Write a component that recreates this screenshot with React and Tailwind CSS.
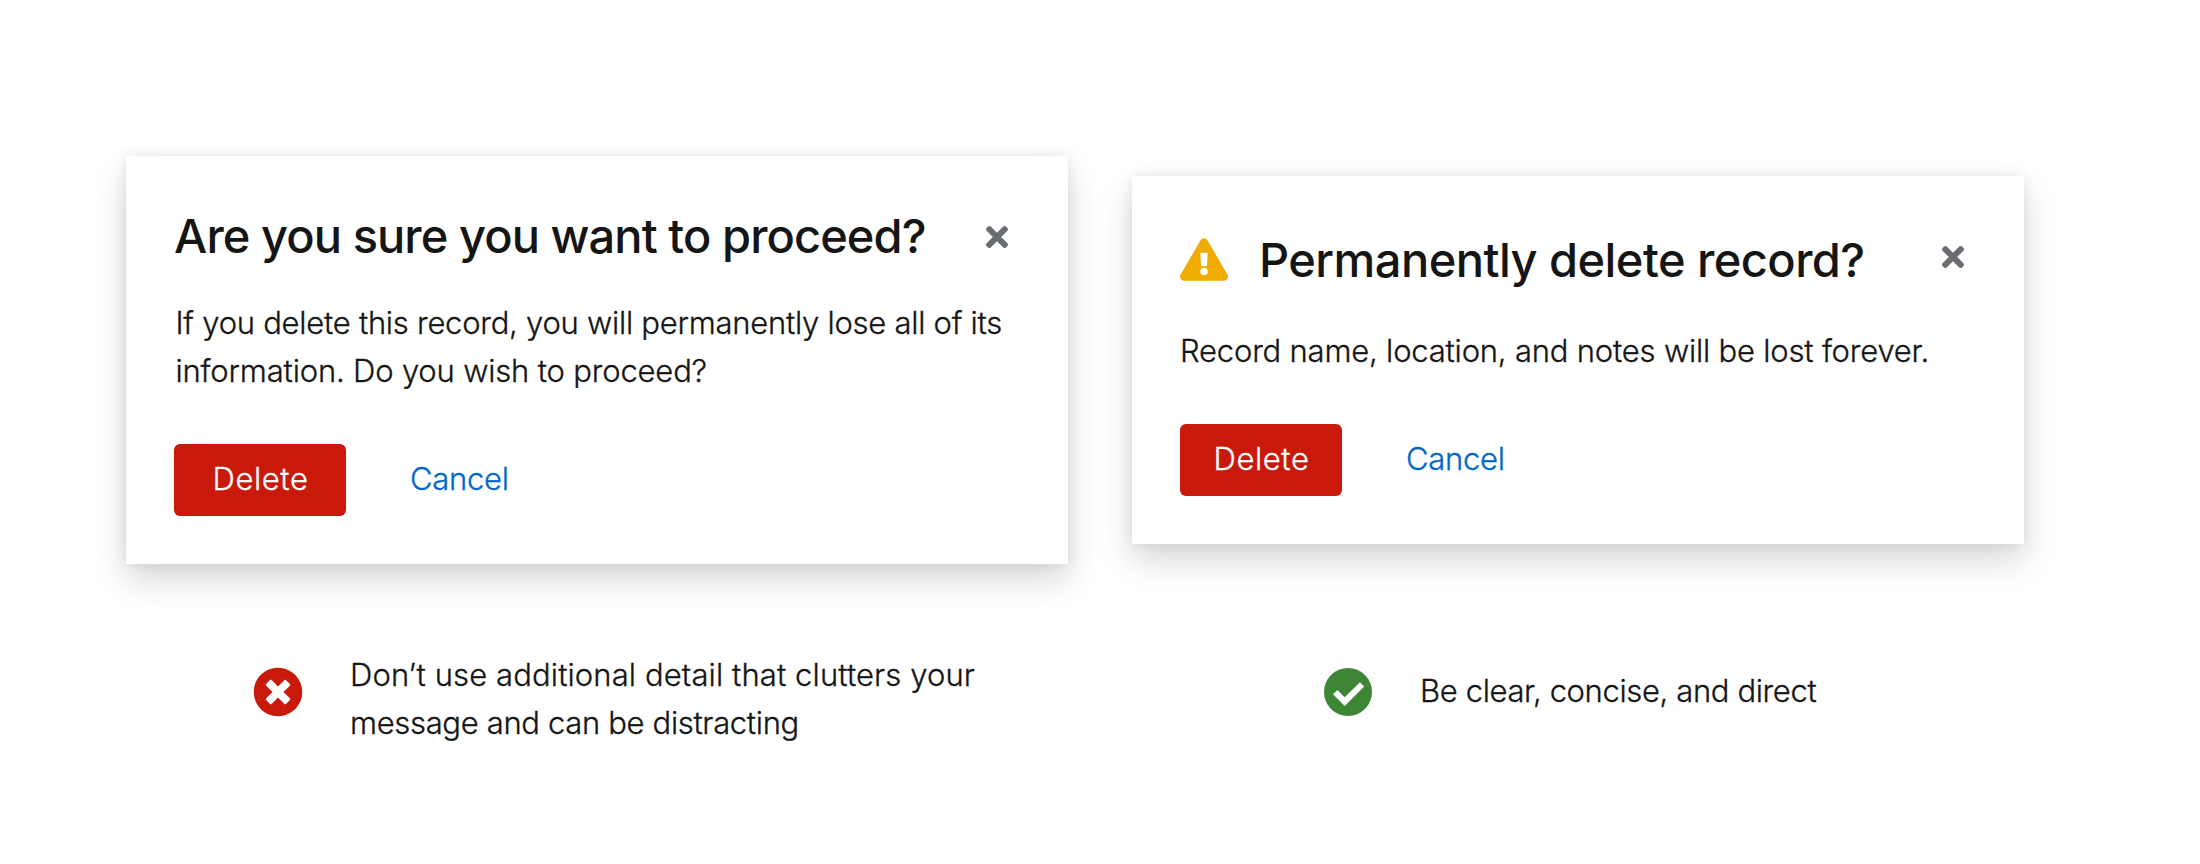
import { FaExclamationTriangle, FaTimes, FaTimesCircle } from 'react-icons/fa';

const cardClass =
  'flex flex-col bg-white px-12 pb-12 shadow-[0_16px_32px_rgba(3,3,3,0.16),0_0_12px_rgba(3,3,3,0.08)]';

function CheckCircle({ className }) {
  return (
    <svg viewBox="0 0 48 48" className={className} aria-hidden="true">
      <circle cx="24" cy="24" r="24" fill="currentColor" />
      <path
        d="M13.36 23.02 20.7 30.36 35.89 15.17 39.21 18.49 20.7 37 10.04 26.34Z"
        fill="white"
        stroke="white"
        strokeWidth="1.4"
        strokeLinejoin="round"
      />
    </svg>
  );
}

function CloseButton({ className }) {
  return (
    <button type="button" aria-label="Close" className={`flex text-[#6a6e73] ${className}`}>
      <FaTimes className="h-8 w-[22px]" />
    </button>
  );
}

function Actions({ deleteClass, cancelClass }) {
  return (
    <div className="mt-[49px] flex h-[72px]">
      <button
        type="button"
        className={`flex items-center justify-center rounded-md bg-[#c9190b] pb-[2px] text-white ${deleteClass}`}
      >
        Delete
      </button>
      <button type="button" className={`flex items-center pb-[2px] text-[#0066cc] ${cancelClass}`}>
        Cancel
      </button>
    </div>
  );
}

export default function App() {
  return (
    <main className="h-[864px] w-[2200px] overflow-hidden bg-white pl-[126px] pt-[156px] font-['Inter',sans-serif] text-[31px] font-light leading-[48px] text-[#151515] [-webkit-text-stroke-width:0.3px]">
      <div className="flex h-[408px] items-center gap-16">
        <section className={`h-[408px] w-[942px] pt-[50px] ${cardClass}`}>
          <header className="flex h-[60px] justify-between">
            <h2 className="whitespace-nowrap text-[47px] font-medium leading-[60px] tracking-[-0.93px] [-webkit-text-stroke-width:0px]">
              Are you sure you want to proceed?
            </h2>
            <CloseButton className="mr-3 mt-[15px] h-8" />
          </header>
          <p className="ml-[1.5px] mt-[33px] whitespace-nowrap tracking-[-0.26px]">
            If you delete this record, you will permanently lose all of its
            <br />
            <span className="tracking-[-0.18px]">information. Do you wish to proceed?</span>
          </p>
          <Actions
            deleteClass="w-[172px] pl-px tracking-[0.6px]"
            cancelClass="ml-16 tracking-[-0.28px]"
          />
        </section>

        <section className={`h-[368px] w-[892px] pt-[54px] ${cardClass}`}>
          <header className="flex h-[60px]">
            <FaExclamationTriangle className="mt-[8px] h-[43px] w-12 text-[#f0ab00]" />
            <h2 className="ml-[31px] whitespace-nowrap text-[47px] font-medium leading-[60px] tracking-[-0.55px] [-webkit-text-stroke-width:0px]">
              Permanently delete record?
            </h2>
            <CloseButton className="ml-auto mr-3 mt-[11px] h-8" />
          </header>
          <p className="mt-[37px] whitespace-nowrap tracking-[-0.2px]">
            Record name, location, and notes will be lost forever.
          </p>
          <Actions
            deleteClass="w-[162px] pl-px tracking-[0.6px]"
            cancelClass="ml-16 tracking-[-0.3px]"
          />
        </section>
      </div>

      <div className="mt-[87px] flex gap-16">
        <div className="flex w-[942px] pl-[127px]">
          <FaTimesCircle className="mt-4 size-[50px] text-[#c9190b]" />
          <p className="ml-[47px] whitespace-nowrap tracking-[0.11px]">
            Don’t use additional detail that clutters your
            <br />
            <span className="tracking-[-0.34px]">message and can be distracting</span>
          </p>
        </div>
        <div className="flex w-[892px] pl-48 pt-4">
          <CheckCircle className="mt-px size-12 text-[#3e8635]" />
          <p className="ml-12 whitespace-nowrap tracking-[-0.37px]">
            Be clear, concise, and direct
          </p>
        </div>
      </div>
    </main>
  );
}
